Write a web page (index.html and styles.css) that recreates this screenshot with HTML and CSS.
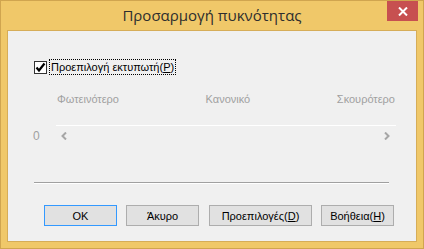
FILE: index.html
```html
<!DOCTYPE html>
<html lang="el">

<head>
    <meta charset="utf-8">
    <title>Προσαρμογή πυκνότητας</title>
    <link rel="stylesheet" href="styles.css">
</head>

<body>
    <div class="window">
        <div class="titlebar">
            <span></span>
            <h1 class="title">Προσαρμογή πυκνότητας</h1>
            <button class="close">
                <svg width="10" height="9" viewBox="0 0 10 9">
                    <path d="M1 0.5 L9 8.5 M9 0.5 L1 8.5" stroke="#fff" stroke-width="2" />
                </svg>
            </button>
        </div>
        <div class="client">
            <div class="check_row">
                <span class="checkbox">
                    <svg width="11" height="11" viewBox="0 0 11 11">
                        <path d="M1.5 5.5 L4 8.5 L9.5 1.5" stroke="#000" stroke-width="2.2" fill="none" />
                    </svg>
                </span>
                <span class="check_label">Προεπιλογή εκτυπωτή(<u>P</u>)</span>
            </div>
            <div class="scale_labels">
                <span>Φωτεινότερο</span>
                <span>Κανονικό</span>
                <span>Σκουρότερο</span>
            </div>
            <div class="track"></div>
            <div class="scale_ticks">
                <span class="value">0</span>
                <svg class="arrow" width="6" height="8" viewBox="0 0 6 8">
                    <path d="M5 0.5 L1.5 4 L5 7.5" stroke="#a6a6a6" stroke-width="2" fill="none" />
                </svg>
                <svg class="arrow arrow_right" width="6" height="8" viewBox="0 0 6 8">
                    <path d="M1 0.5 L4.5 4 L1 7.5" stroke="#a6a6a6" stroke-width="2" fill="none" />
                </svg>
            </div>
            <div class="separator"></div>
            <div class="buttons">
                <button class="btn btn_default">OK</button>
                <button class="btn">Άκυρο</button>
                <button class="btn btn_wide">Προεπιλογές(<u>D</u>)</button>
                <button class="btn">Βοήθεια(<u>H</u>)</button>
            </div>
        </div>
    </div>
</body>

</html>
```
FILE: styles.css
```css
* {
    box-sizing: border-box;
}

body {
    margin: 0;
    background: #ffffff;
}

.window {
    width: 424px;
    height: 249px;
    background: #f0c869;
    border: 1px solid #d0a54f;
    padding: 0 6px 6px;
    display: flex;
    flex-direction: column;
}

.titlebar {
    height: 29px;
    display: grid;
    grid-template-columns: 1fr auto 1fr;
    align-items: start;
}

.title {
    margin: 4px 0 0;
    font-family: 'Open Sans', sans-serif;
    font-weight: 400;
    font-size: 15px;
    line-height: 20px;
    color: #2e2e2e;
}

.close {
    justify-self: end;
    width: 31px;
    height: 20px;
    margin-right: -1px;
    border: none;
    padding: 0;
    background: #c75050;
    display: flex;
    align-items: center;
    justify-content: center;
}

.client {
    height: 212px;
    background: #f0f0f0;
    border: 1px solid #d6ad58;
    font-family: 'Liberation Sans', sans-serif;
    font-size: 11px;
    color: #000;
}

.check_row {
    display: flex;
    align-items: center;
    margin: 28px 0 0 26px;
}

.checkbox {
    width: 13px;
    height: 13px;
    background: #fff;
    border: 1px solid #333;
    display: flex;
    align-items: center;
    justify-content: center;
}

.check_label {
    margin-left: 2px;
    padding: 0 1px;
    line-height: 14px;
    border: 1px dotted #000;
    color: #000;
}

.scale_labels {
    display: flex;
    justify-content: space-between;
    margin: 17px 21px 0 49px;
    color: #a0a0a0;
    line-height: 14px;
}

.track {
    height: 1px;
    background: #ffffff;
    margin: 19px 20px 0 48px;
}

.scale_ticks {
    display: flex;
    align-items: center;
    margin: 5px 26px 0 25px;
    height: 10px;
    color: #a0a0a0;
}

.value {
    font-size: 12px;
    line-height: 10px;
    width: 28px;
}

.arrow_right {
    margin-left: auto;
}

.separator {
    height: 2px;
    margin: 41px 27px 0 26px;
    border-top: 1px solid #a0a0a0;
    border-bottom: 1px solid #ffffff;
}

.buttons {
    display: flex;
    gap: 9px;
    margin: 21px 0 0 36px;
}

.btn {
    width: 73px;
    height: 21px;
    padding: 0;
    font-family: 'Liberation Sans', sans-serif;
    font-size: 11px;
    color: #000;
    background: #e1e1e1;
    border: 1px solid #adadad;
}

.btn_default {
    border-color: #3399ff;
}

.btn_wide {
    width: 103px;
    margin-left: 1px;
}
```
